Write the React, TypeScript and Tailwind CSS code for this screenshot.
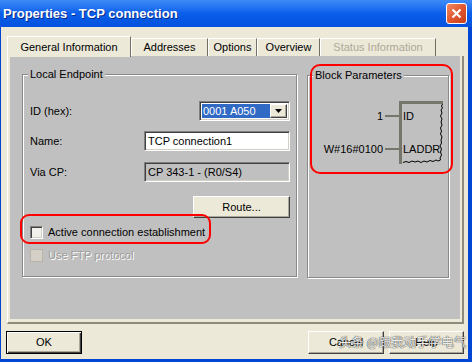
const raised =
  "bg-[#ece9d8] border border-t-white border-l-white border-r-[#404040] border-b-[#404040] shadow-[inset_-1px_-1px_0_#aca899]";
const sunken =
  "border border-t-[#808080] border-l-[#808080] border-r-white border-b-white shadow-[inset_1px_1px_0_#404040,inset_-1px_-1px_0_#d4d0c8]";

function Tab({ label, w, active, disabled }: { label: string; w: string; active?: boolean; disabled?: boolean }) {
  return (
    <div
      className={`${w} ${
        active ? "h-[21px] -mb-px relative z-10" : "h-[18px]"
      } flex items-center justify-center bg-[#ece9d8] border-t border-l border-t-white border-l-white border-r border-r-[#716f64] ${
        disabled ? "text-[#aca899]" : "text-black"
      }`}
    >
      {label}
    </div>
  );
}

function Group({ title, w, className, children }: { title: string; w: string; className?: string; children?: React.ReactNode }) {
  return (
    <div
      className={`${w} h-[203px] relative border border-[#8a8a8a] shadow-[inset_1px_1px_0_white,1px_1px_0_white] ${className ?? ""}`}
    >
      <span className="absolute left-[5px] -top-[8px] px-[2px] bg-[#c0c0c0] leading-[14px]">{title}</span>
      {children}
    </div>
  );
}

function Checkbox({ label, disabled }: { label: string; disabled?: boolean }) {
  return (
    <div className="flex items-center h-[13px] gap-[5px]">
      <div
        className={`w-[13px] h-[13px] ${
          disabled
            ? "bg-[#d4d0c8] border border-[#b8b4a8]"
            : `bg-[#f2f1ec] ${sunken}`
        }`}
      />
      <span className={disabled ? "text-[#9d9d9d] [text-shadow:1px_1px_0_white]" : ""}>{label}</span>
    </div>
  );
}

function Btn({ label, w, def }: { label: string; w: string; def?: boolean }) {
  return (
    <div
      className={`${w} h-[23px] flex items-center justify-center ${
        def
          ? "bg-[#ece9d8] border border-black shadow-[inset_1px_1px_0_white,inset_-1px_-1px_0_#404040,inset_-2px_-2px_0_#aca899]"
          : raised
      }`}
    >
      {label}
    </div>
  );
}

export default function App() {
  return (
    <div className="w-[472px] h-[362px] relative overflow-hidden bg-[#0046d5] flex flex-col font-['Liberation_Sans',Arial,sans-serif] text-[11px] text-black">
      {/* title bar */}
      <div className="h-[27px] shrink-0 flex items-center justify-between pl-[3px] pr-[5px] bg-gradient-to-b from-[#3d8bf8] via-[#0a5eea] to-[#0352dd]">
        <span className="text-white font-bold text-[13px] [text-shadow:1px_1px_0_#0a2a8a]">Properties - TCP connection</span>
        <div className="w-[21px] h-[21px] rounded-[3px] border border-white bg-gradient-to-br from-[#f08a62] via-[#e0562f] to-[#c8401c] flex items-center justify-center">
          <svg width="11" height="11" viewBox="0 0 11 11">
            <path d="M1.5 1.5 L9.5 9.5 M9.5 1.5 L1.5 9.5" stroke="white" strokeWidth="2.2" />
          </svg>
        </div>
      </div>

      {/* body */}
      <div className="flex-1 ml-[1px] mr-[4px] mb-[3px] bg-[#ece9d8] flex flex-col">
        <div className="flex items-end pl-[6px] pt-[9px] h-[29px]">
          <Tab label="General Information" w="w-[124px]" active />
          <Tab label="Addresses" w="w-[77px]" />
          <Tab label="Options" w="w-[49px]" />
          <Tab label="Overview" w="w-[63px]" />
          <Tab label="Status Information" w="w-[116px]" disabled />
        </div>

        <div className="ml-[6px] w-[457px] h-[268px] border-l border-l-white border-r-2 border-b-2 border-r-[#8e8b7e] border-b-[#8e8b7e] pl-[2px] pr-[2px] pb-[3px]">
          <div className="h-full bg-[#c0c0c0] relative flex gap-[10px] pl-[12px] pt-[18px]">
            <Group title="Local Endpoint" w="w-[275px]" className="flex flex-col pl-[7px] pr-[6px] pt-[26px]">
              <div className="h-[20px] flex items-center justify-between">
                <span>ID (hex):</span>
                <div className={`w-[91px] h-[20px] bg-white ${sunken} flex items-center p-[2px]`}>
                  <span className="flex-1 h-full bg-[#316ac5] text-white flex items-center pl-[1px]">0001 A050</span>
                  <div className={`w-[17px] h-full ${raised} flex items-center justify-center`}>
                    <svg width="7" height="4" viewBox="0 0 7 4">
                      <path d="M0 0 H7 L3.5 4 Z" fill="black" />
                    </svg>
                  </div>
                </div>
              </div>
              <div className="h-[20px] mt-[10px] flex items-center justify-between">
                <span>Name:</span>
                <div className={`w-[146px] h-[20px] bg-white ${sunken} flex items-center pl-[3px]`}>TCP connection1</div>
              </div>
              <div className="h-[20px] mt-[11px] flex items-center justify-between">
                <span>Via CP:</span>
                <div className={`w-[146px] h-[20px] bg-[#c0c0c0] ${sunken} flex items-center pl-[3px]`}>CP 343-1 - (R0/S4)</div>
              </div>
              <div className={`self-end mt-[14px] w-[97px] h-[22px] ${raised} flex items-center justify-center`}>Route...</div>
              <div className="mt-[8px]">
                <Checkbox label="Active connection establishment" />
              </div>
              <div className="mt-[10px]">
                <Checkbox label="Use FTP protocol" disabled />
              </div>
            </Group>

            <Group title="Block Parameters" w="w-[142px]" className="mt-px flex justify-end pr-[5px] pt-[25px]">
              <div className="flex h-[63px]">
                <div className="flex flex-col items-end">
                  <div className="mt-[8px] h-[14px] flex items-center">
                    <span>1</span>
                    <div className="ml-[2px] w-[14px] h-[2px] bg-[#77766c]" />
                  </div>
                  <div className="mt-[19px] h-[14px] flex items-center">
                    <span>W#16#0100</span>
                    <div className="ml-[2px] w-[14px] h-[2px] bg-[#77766c]" />
                  </div>
                </div>
                <div className="w-[44px] h-[63px] relative border-l-[3px] border-t-[3px] border-[#77766c] flex flex-col pl-[1px]">
                  <svg className="absolute -left-[3px] -top-[3px]" width="44" height="63" viewBox="0 0 44 63">
                    <path
                      d="M43.5 3 L42.5 5 L43.5 7 L42 9 L43 12 L41.5 15 L43 18 L42 21 L43 24 L41.5 27 L42.5 30 L41.5 33 L43 36 L42 39 L42.5 42 L41 45 L42.5 48 L41.5 51 L42.5 54 L41 57 L41.5 59 L39 60 L37 59 L34 60.5 L31 59.5 L28 61 L25 60 L22 61.5 L19 60 L16 61 L13 60 L10 61.5 L7 60.5 L4 61.5"
                      fill="none"
                      stroke="black"
                      strokeWidth="1"
                    />
                  </svg>
                  <span className="mt-[5px] h-[14px] leading-[14px]">ID</span>
                  <span className="mt-[19px] h-[14px] leading-[14px]">LADDR</span>
                </div>
              </div>
            </Group>

            {/* red annotation marks */}
            <div className="absolute left-[300px] top-[8px] w-[143px] h-[110px] border-2 border-[#ff0000] rounded-[10px] pointer-events-none" />
            <div className="absolute left-[10px] top-[158px] w-[191px] h-[30px] border-2 border-[#ff0000] rounded-[9px] pointer-events-none" />
          </div>
        </div>

        <div className="flex items-center justify-between pl-[5px] pr-[4px] pt-[7px]">
          <Btn label="OK" w="w-[76px]" def />
          <div className="flex gap-[5px]">
            <Btn label="Cancel" w="w-[76px]" />
            <Btn label="Help" w="w-[75px]" />
          </div>
        </div>
      </div>

      <span className="absolute left-[339px] top-[333px] text-[12.5px] font-['Noto_Sans_CJK_SC',sans-serif] text-white/90 [text-shadow:0_0_1px_#333,0_0_1px_#333]">
        头条 @跟我动手学电气
      </span>
    </div>
  );
}
